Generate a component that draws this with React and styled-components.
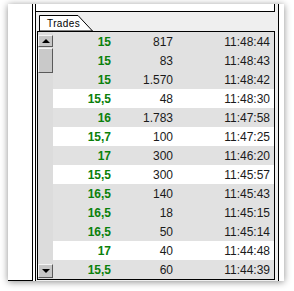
import React from 'react'
import styled, { createGlobalStyle } from 'styled-components'

const GlobalStyle = createGlobalStyle`
  html, body {
    margin: 0;
    padding: 0;
    background: #fff;
  }
  body {
    width: 294px;
    height: 291px;
    overflow: hidden;
    font-family: 'Liberation Sans', Arial, sans-serif;
  }
`

const Window = styled.div`
  display: flex;
  width: 276px;
  height: 277px;
  margin: 4px 0 0 8px;
  background: #fff;
  box-shadow: 0 1px 7px rgba(0, 0, 0, 0.45);
  overflow: hidden;
`

const SidePane = styled.div`
  width: 24px;
  height: 276px;
  border-right: 1px solid #000;
  border-bottom: 1px solid #000;
  background: #fff;
  flex-shrink: 0;
`

const Panel = styled.div`
  display: flex;
  flex-direction: column;
  width: 242px;
  margin-left: 2px;
  border-left: 1px solid #000;
  border-right: 1px solid #000;
  background: #efefef;
  flex-shrink: 0;
`

const TopBox = styled.div`
  width: 238px;
  height: 7px;
  background: #fff;
  border-right: 1px solid #000;
  border-bottom: 1px solid #000;
`

const TabRow = styled.div`
  display: flex;
  align-items: flex-end;
  height: 19px;
  padding-left: 3px;
`

const Tab = styled.div`
  position: relative;
  width: 54px;
  height: 16px;
  box-sizing: border-box;
  padding: 3px 0 0 8px;
  font-size: 10px;
  letter-spacing: 0.4px;
  line-height: 11px;
  color: #000;

  svg {
    position: absolute;
    left: 0;
    top: 0;
  }

  span {
    position: relative;
  }
`

const TableBox = styled.div`
  display: flex;
  width: 236px;
  height: 247px;
  margin-left: 1px;
  border: 1px solid #000;
  background: #fff;
`

const Scrollbar = styled.div`
  display: flex;
  flex-direction: column;
  width: 15px;
  padding-top: 3px;
  padding-bottom: 1px;
  background: #dcdcdc;
  flex-shrink: 0;
`

const ScrollButton = styled.div`
  display: flex;
  align-items: center;
  justify-content: center;
  box-sizing: border-box;
  width: 15px;
  height: ${(p) => p.$h}px;
  background: #c6c6c6;
  border-top: 1px solid #f4f4f4;
  border-left: 1px solid #f4f4f4;
  border-right: 1px solid #5a5a5a;
  border-bottom: 1px solid #5a5a5a;
`

const Thumb = styled(ScrollButton)`
  margin-top: 1px;
  background: #c9c9c9;
`

const Track = styled.div`
  flex: 1;
`

const Arrow = styled.div`
  width: 0;
  height: 0;
  border-left: 4px solid transparent;
  border-right: 4px solid transparent;
  ${(p) =>
    p.$down
      ? 'border-top: 4px solid #000;'
      : 'border-bottom: 4px solid #000;'}
`

const Rows = styled.div`
  flex: 1;
  overflow: hidden;
`

const Row = styled.div`
  display: grid;
  grid-template-columns: 58px 62px 97px;
  height: 19px;
  align-items: center;
  background: ${(p) => (p.$shaded ? '#e1e1e1' : '#fff')};
  font-size: 12px;
  color: #1a1a1a;
`

const Price = styled.span`
  text-align: right;
  font-weight: bold;
  color: #0a800a;
`

const Cell = styled.span`
  text-align: right;
`

const trades = [
  ['15', '817', '11:48:44', true],
  ['15', '83', '11:48:43', true],
  ['15', '1.570', '11:48:42', true],
  ['15,5', '48', '11:48:30', false],
  ['16', '1.783', '11:47:58', true],
  ['15,7', '100', '11:47:25', false],
  ['17', '300', '11:46:20', true],
  ['15,5', '300', '11:45:57', false],
  ['16,5', '140', '11:45:43', true],
  ['16,5', '18', '11:45:15', true],
  ['16,5', '50', '11:45:14', true],
  ['17', '40', '11:44:48', false],
  ['15,5', '60', '11:44:39', true],
]

const App = () => {
  return (
    <>
      <GlobalStyle />
      <Window>
        <SidePane />
        <Panel>
          <TopBox />
          <TabRow>
            <Tab>
              <svg width="54" height="16" viewBox="0 0 54 16">
                <polygon
                  points="0.5,16 0.5,0.5 39,0.5 53.5,16"
                  fill="#fff"
                  stroke="#000"
                  strokeWidth="1"
                />
              </svg>
              <span>Trades</span>
            </Tab>
          </TabRow>
          <TableBox>
            <Scrollbar>
              <ScrollButton $h={12}>
                <Arrow />
              </ScrollButton>
              <Thumb $h={25} />
              <Track />
              <ScrollButton $h={14}>
                <Arrow $down />
              </ScrollButton>
            </Scrollbar>
            <Rows>
              {trades.map(([price, qty, time, shaded], i) => (
                <Row key={i} $shaded={shaded}>
                  <Price>{price}</Price>
                  <Cell>{qty}</Cell>
                  <Cell>{time}</Cell>
                </Row>
              ))}
            </Rows>
          </TableBox>
        </Panel>
      </Window>
    </>
  )
}

export default App
